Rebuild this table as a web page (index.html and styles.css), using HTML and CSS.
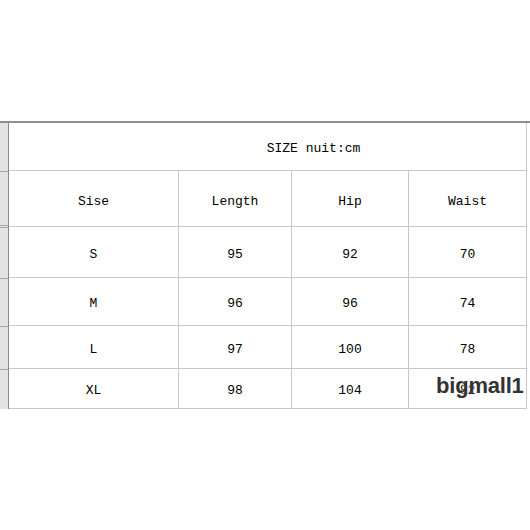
FILE: index.html
```html
<!DOCTYPE html>
<html>
<head>
<meta charset="utf-8">
<link rel="stylesheet" href="styles.css">
</head>
<body>
<div class="page">
  <div class="sheet">
    <div class="gutter">
      <div class="g r0"></div>
      <div class="g r1"></div>
      <div class="g r2"></div>
      <div class="g r3"></div>
      <div class="g r4"></div>
      <div class="g r5"></div>
    </div>
    <div class="table">
      <div class="cell title">SIZE nuit:cm</div>
      <div class="cell h">Sise</div>
      <div class="cell h">Length</div>
      <div class="cell h">Hip</div>
      <div class="cell h last">Waist</div>
      <div class="cell r2">S</div>
      <div class="cell r2">95</div>
      <div class="cell r2">92</div>
      <div class="cell r2 last">70</div>
      <div class="cell r3">M</div>
      <div class="cell r3">96</div>
      <div class="cell r3">96</div>
      <div class="cell r3 last">74</div>
      <div class="cell r4">L</div>
      <div class="cell r4">97</div>
      <div class="cell r4">100</div>
      <div class="cell r4 last">78</div>
      <div class="cell r5">XL</div>
      <div class="cell r5">98</div>
      <div class="cell r5">104</div>
      <div class="cell r5 last">82</div>
    </div>
    <div class="mark">bigmall1</div>
  </div>
</div>
</body>
</html>
```

FILE: styles.css
```css
html, body {
  margin: 0;
  padding: 0;
  background: #ffffff;
}
.page {
  width: 530px;
  height: 530px;
  padding-top: 121px;
  box-sizing: border-box;
}
.sheet {
  position: relative;
  display: flex;
  border-top: 2px solid #8e8e8e;
  width: 530px;
}
.gutter {
  width: 8px;
  background: #e3e3e3;
  border-right: 1px solid #8a8a8a;
  display: flex;
  flex-direction: column;
}
.g {
  border-bottom: 1px solid #a8a8a8;
  box-sizing: border-box;
}
.gutter .r0 { height: 49px; }
.gutter .r1 { height: 56px; border-bottom: 3px double #a8a8a8; }
.gutter .r2 { height: 51px; }
.gutter .r3 { height: 48px; }
.gutter .r4 { height: 43px; }
.gutter .r5 { height: 39px; border-bottom: none; }
.table {
  display: grid;
  grid-template-columns: 170px 113px 117px 118px;
  grid-template-rows: 48px 56px 51px 48px 43px 40px;
  font-family: "Liberation Mono", "DejaVu Sans Mono", monospace;
  font-size: 13px;
  color: #000;
}
.cell {
  display: flex;
  align-items: center;
  justify-content: center;
  border-right: 1px solid #c8c8c8;
  border-bottom: 1px solid #c8c8c8;
  box-sizing: border-box;
}
.title {
  grid-column: 1 / 5;
  padding-left: 92px;
  padding-top: 4px;
  background: #fff;
}
.h { padding-top: 5px; }
.r2, .r3, .r4, .r5 { padding-top: 4px; }
.mark {
  position: absolute;
  left: 436px;
  top: 250px;
  font-family: "Liberation Sans", Arial, sans-serif;
  font-weight: bold;
  font-size: 22px;
  color: #333333;
  letter-spacing: -0.2px;
  text-shadow: 0 0 2px #fff;
}
```
